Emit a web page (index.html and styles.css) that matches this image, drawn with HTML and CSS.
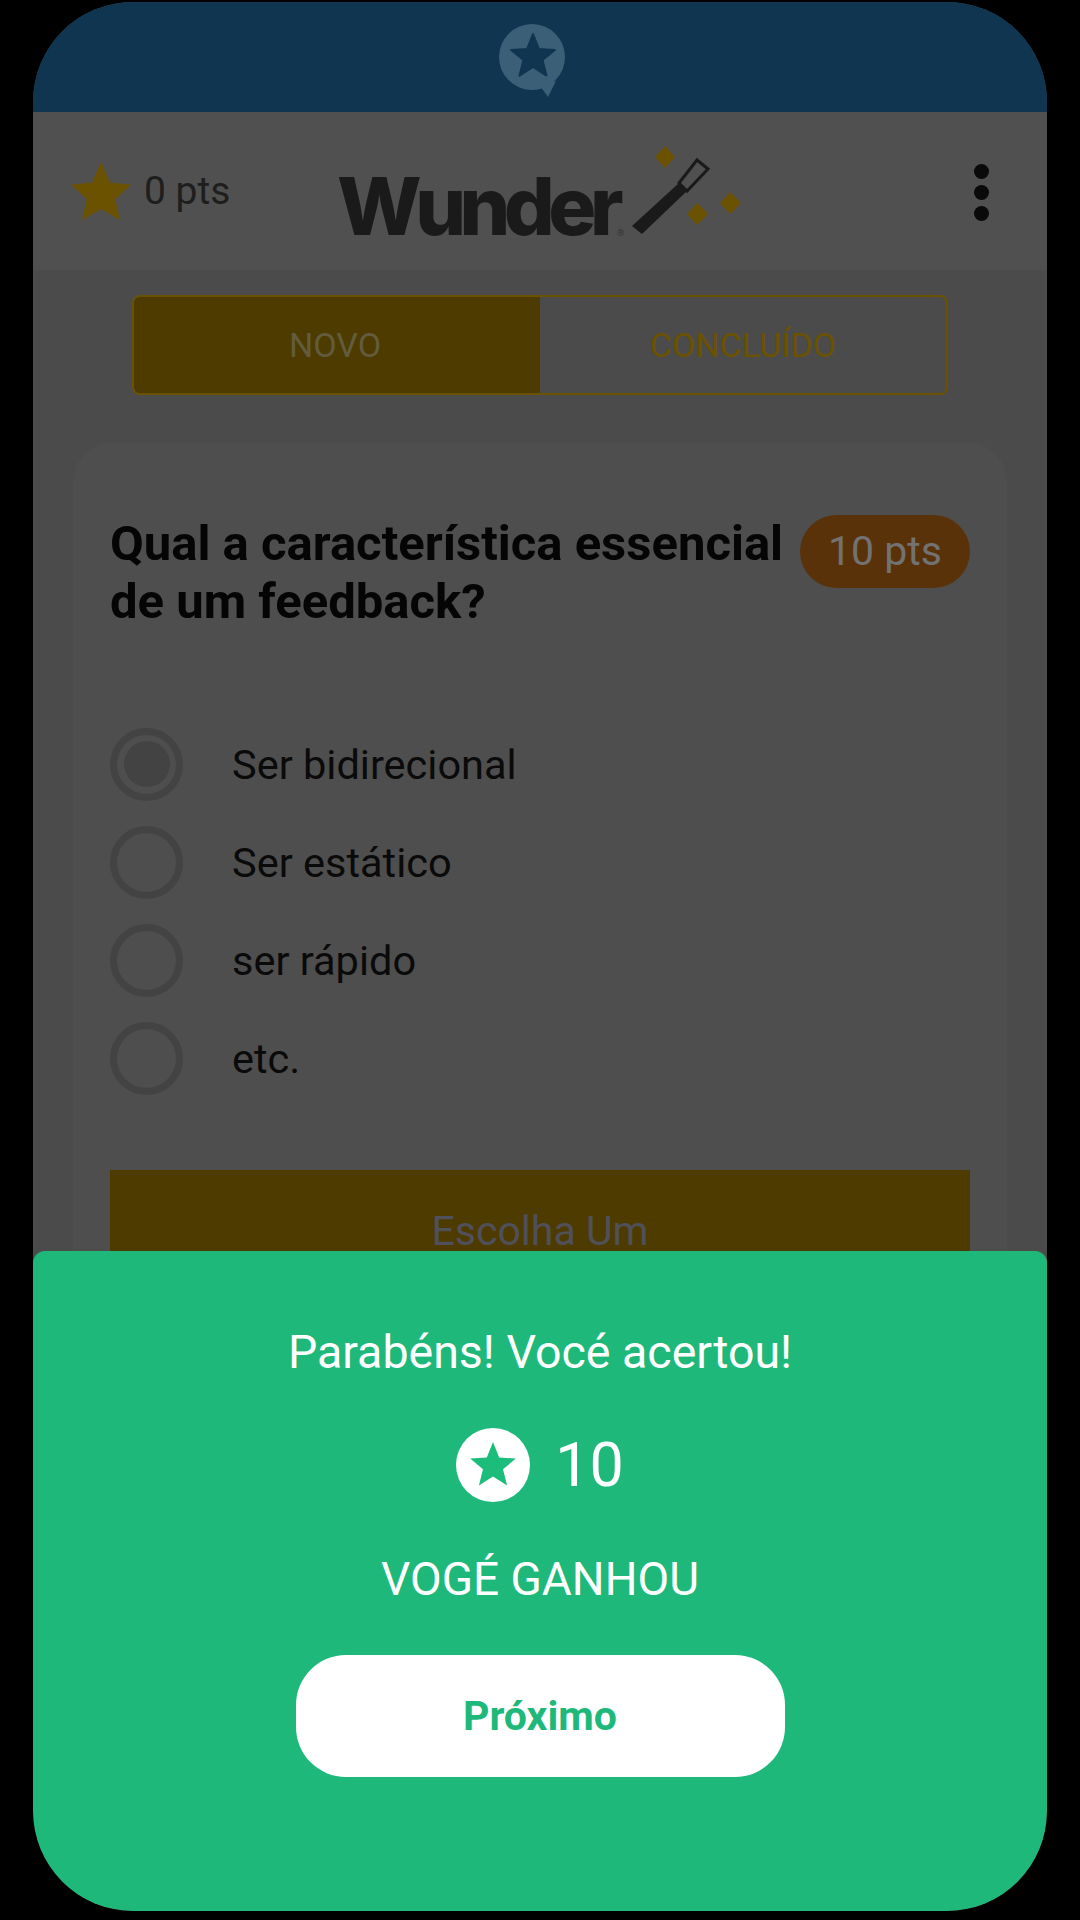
FILE: index.html
```html
<!DOCTYPE html>
<html lang="pt">
<head>
  <meta charset="UTF-8">
  <meta name="viewport" content="width=device-width, initial-scale=1.0">
  <title>Wunder</title>
  <link rel="stylesheet" href="styles.css">
</head>
<body>
  <div class="phone">
    <div class="status-bar">
      <svg class="status-icon" viewBox="0 0 70 80">
        <circle cx="34" cy="35" r="33" fill="#3c5f78"/>
        <path d="M42 64l8 11 8-16z" fill="#3c5f78"/>
        <path d="M35 12l5.900 14.900 16 1-12.400 10.200 4 15.500L35 45l-13.500 8.600 4-15.500-12.400-10.200 16-1z" fill="#0f3550" stroke="#0f3550" stroke-width="2" stroke-linejoin="round"/>
      </svg>
    </div>

    <header class="top-bar">
      <div class="score">
        <svg class="score-star" viewBox="0 0 60 58">
          <path d="M30 0l9 20.500 21 2.200-15.800 14.600L49 58 30 47.200 11 58l4.800-20.700L0 22.700l21-2.200z" fill="#6b5200"/>
        </svg>
        <span>0 pts</span>
      </div>
      <div class="logo">
        <span class="logo-text">Wunder</span><span class="logo-mark">®</span>
        <svg class="logo-wand" viewBox="0 0 115 95">
          <path d="M3 80l10 8 45-43-8-8z" fill="#1a1a1a"/>
          <path d="M50 37l18-23 11 9-21 22z" fill="none" stroke="#1a1a1a" stroke-width="3"/>
          <path d="M36 0l10 11-10 11-10-11z" fill="#6b5200"/>
          <path d="M68 57l11 11-11 11-10-11z" fill="#6b5200"/>
          <path d="M101 46l11 11-11 11-10-11z" fill="#6b5200"/>
        </svg>
      </div>
      <div class="menu-dots"><i></i><i></i><i></i></div>
    </header>

    <main class="content">
      <div class="tabs">
        <div class="tab tab-active">NOVO</div>
        <div class="tab">CONCLUÍDO</div>
      </div>

      <section class="card">
        <div class="question-row">
          <h1 class="question">Qual a característica essencial de um feedback?</h1>
          <span class="badge">10 pts</span>
        </div>

        <ul class="options">
          <li class="option option-selected"><span class="radio"></span>Ser bidirecional</li>
          <li class="option"><span class="radio"></span>Ser estático</li>
          <li class="option"><span class="radio"></span>ser rápido</li>
          <li class="option"><span class="radio"></span>etc.</li>
        </ul>

        <div class="choose-btn">Escolha Um</div>
      </section>
    </main>

    <div class="result-sheet">
      <p class="result-title">Parabéns! Vocé acertou!</p>
      <div class="result-points">
        <svg class="result-star" viewBox="0 0 74 74">
          <circle cx="37" cy="37" r="37" fill="#fff"/>
          <path d="M37 14l6.200 15.500 16.600 1.100-12.800 10.600 4.100 16.200L37 48.500l-14.100 8.900 4.100-16.200-12.800-10.600 16.600-1.100z" fill="#1cbc7b"/>
        </svg>
        <span>10</span>
      </div>
      <p class="result-label">VOGÉ GANHOU</p>
      <div class="next-btn">Próximo</div>
    </div>
  </div>
</body>
</html>
```

FILE: styles.css
```css
* {
  box-sizing: border-box;
}

body {
  margin: 0;
  background-color: #000;
  font-family: Roboto, "Liberation Sans", sans-serif;
}

.phone {
  position: relative;
  width: 1014px;
  height: 1909px;
  margin: 2px auto 0;
  overflow: hidden;
  border-radius: 100px;
  background-color: #4b4b4b;
}

.status-bar {
  display: flex;
  justify-content: center;
  height: 110px;
  padding-top: 20px;
  padding-right: 14px;
  background-color: #0f3550;
}

.status-icon {
  width: 70px;
  height: 80px;
}

.top-bar {
  display: flex;
  align-items: center;
  height: 158px;
  padding: 0 38px;
  background-color: #505050;
}

.score {
  display: flex;
  align-items: center;
  gap: 13px;
  width: 266px;
  font-size: 39px;
  color: #1e1e1e;
}

.score-star {
  width: 60px;
  height: 58px;
}

.logo {
  display: flex;
  align-items: flex-start;
  height: 95px;
}

.logo-text {
  margin-top: 20px;
  font-family: Inter, "Liberation Sans", sans-serif;
  font-size: 80px;
  font-weight: 800;
  letter-spacing: -6.5px;
  line-height: 84px;
  color: #1a1a1a;
}

.logo-mark {
  margin-top: 84px;
  font-size: 9px;
  color: #333;
}

.logo-wand {
  width: 115px;
  height: 95px;
  margin-top: 2px;
  margin-left: 5px;
}

.menu-dots {
  display: flex;
  flex-direction: column;
  gap: 6px;
  margin-top: 2px;
  margin-left: auto;
  margin-right: 20px;
}

.menu-dots i {
  display: block;
  width: 15px;
  height: 15px;
  border-radius: 50%;
  background-color: #0a0a0a;
}

.content {
  padding: 25px 40px 0;
}

.tabs {
  display: flex;
  width: 816px;
  height: 100px;
  margin: 0 auto;
  border: 2px solid #6b5200;
  border-radius: 8px;
  overflow: hidden;
}

.tab {
  display: flex;
  width: 50%;
  align-items: center;
  justify-content: center;
  font-size: 34px;
  color: #6b5200;
}

.tab-active {
  padding-right: 4px;
  background-color: #4d3b00;
  color: #625c3c;
}

.card {
  margin-top: 47px;
  height: 900px;
  padding: 73px 37px 0;
  border-radius: 40px;
  background-color: #4e4e4e;
}

.question-row {
  display: flex;
  align-items: flex-start;
  justify-content: space-between;
}

.question {
  width: 685px;
  margin: 0;
  font-size: 49px;
  font-weight: 700;
  line-height: 58px;
  color: #050505;
}

.badge {
  width: 170px;
  height: 73px;
  border-radius: 37px;
  background-color: #5a3209;
  font-size: 41px;
  line-height: 73px;
  text-align: center;
  color: #727272;
}

.options {
  margin: 0;
  margin-top: 84px;
  padding: 0;
  list-style: none;
}

.option {
  display: flex;
  align-items: center;
  gap: 49px;
  height: 98px;
  font-size: 41.5px;
  color: #0a0a0a;
}

.radio {
  display: flex;
  align-items: center;
  justify-content: center;
  width: 73px;
  height: 73px;
  border: 7px solid #434343;
  border-radius: 50%;
}

.option-selected .radio::after {
  content: "";
  width: 46px;
  height: 46px;
  border-radius: 50%;
  background-color: #434343;
}

.choose-btn {
  height: 120px;
  margin-top: 63px;
  padding-top: 37px;
  background-color: #4d3b00;
  font-size: 41px;
  text-align: center;
  color: #50505a;
}

.result-sheet {
  display: flex;
  flex-direction: column;
  align-items: center;
  position: absolute;
  left: 0;
  right: 0;
  bottom: 0;
  height: 660px;
  padding-top: 74px;
  border-radius: 12px 12px 100px 100px;
  background-color: #1eb97a;
  color: #fff;
}

.result-title {
  margin: 0;
  font-size: 46.5px;
  line-height: 54px;
}

.result-points {
  display: flex;
  align-items: center;
  gap: 25px;
  margin-top: 49px;
  font-size: 61px;
}

.result-star {
  width: 74px;
  height: 74px;
}

.result-label {
  margin: 0;
  margin-top: 50px;
  font-size: 46px;
  line-height: 54px;
}

.next-btn {
  width: 489px;
  height: 122px;
  margin-top: 49px;
  border-radius: 50px;
  background-color: #fff;
  font-size: 41px;
  font-weight: 700;
  line-height: 122px;
  text-align: center;
  color: #1eb97a;
}
```
